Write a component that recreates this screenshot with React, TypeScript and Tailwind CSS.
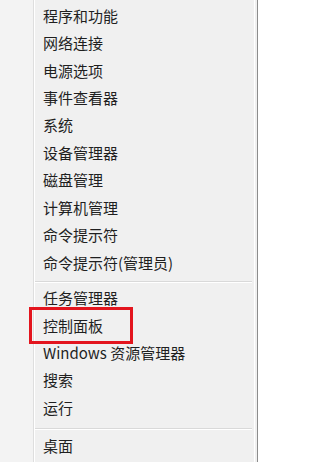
import React from "react"

const GROUP_A = [
  "程序和功能",
  "网络连接",
  "电源选项",
  "事件查看器",
  "系统",
  "设备管理器",
  "磁盘管理",
  "计算机管理",
  "命令提示符",
  "命令提示符(管理员)",
]

const GROUP_B = ["任务管理器", "控制面板", "Windows 资源管理器", "搜索", "运行"]

function Item({ label }: { label: string }) {
  return (
    <div className="h-[27.45px] flex items-center pl-[8px] text-[15px] leading-none text-[#1f1f1f]">
      {label}
    </div>
  )
}

function Separator({ className }: { className: string }) {
  return (
    <div className={className}>
      <div className="h-px bg-[#d9d9d9]" />
      <div className="h-px bg-white" />
    </div>
  )
}

export default function App() {
  return (
    <div
      className="relative w-[258px] h-[462px] overflow-hidden bg-[#f0f0f0] flex"
      style={{ fontFamily: '"Microsoft YaHei", "Noto Sans CJK SC", "Noto Sans", sans-serif' }}
    >
      {/* icon gutter */}
      <div className="w-[34px] shrink-0 bg-[#f3f3f3] border-r border-[#dedede]" />
      <div className="w-px shrink-0 bg-white" />

      <div className="flex-1 flex flex-col">
        <div className="pt-[1.5px]">
          {GROUP_A.map((l) => (
            <Item key={l} label={l} />
          ))}
        </div>
        <Separator className="pt-[5.5px] pb-[0.5px]" />
        <div>
          {GROUP_B.map((l) => (
            <Item key={l} label={l} />
          ))}
        </div>
        <Separator className="pt-[7px] pb-[2px]" />
        <Item label="桌面" />
      </div>

      {/* right frame */}
      <div className="w-[2px] shrink-0" />
      <div className="w-px shrink-0 bg-white" />
      <div className="w-[2px] shrink-0 bg-[#f0f0f0]" />
      <div className="w-px shrink-0 bg-[#8c8c8c]" />

      {/* annotation highlight */}
      <div className="absolute left-[29px] top-[307px] w-[104px] h-[37px] border-[3px] border-[#e3151e]" />
    </div>
  )
}
